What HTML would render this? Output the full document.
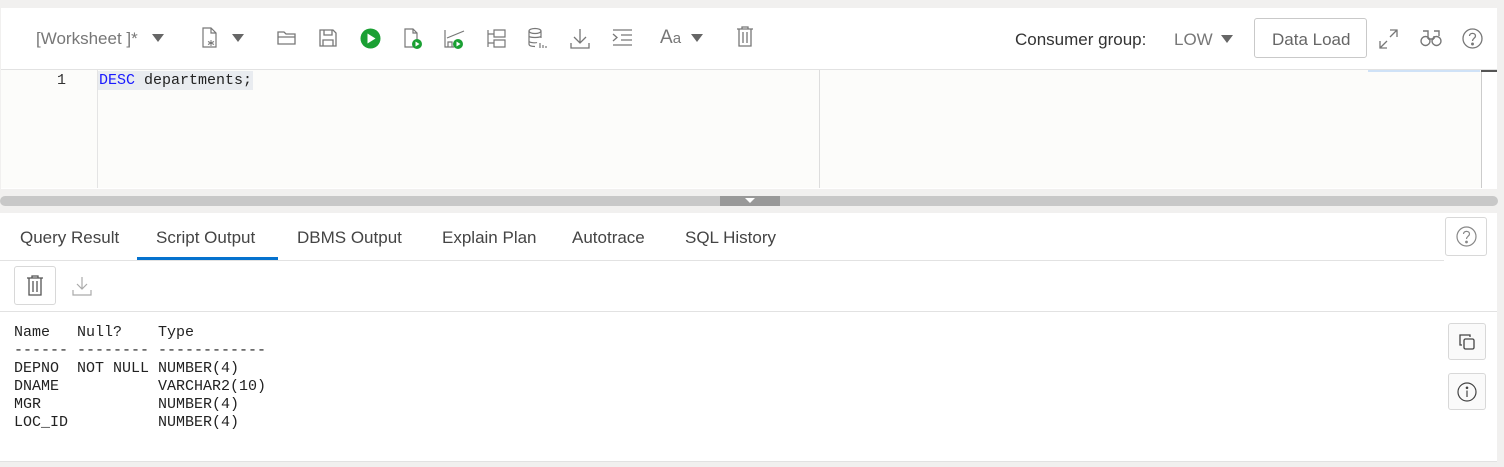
<!DOCTYPE html>
<html><head><style>
*{margin:0;padding:0;box-sizing:border-box}
body{width:1504px;height:467px;background:#f1f0ef;position:relative;overflow:hidden;font-family:"Liberation Sans",sans-serif;color:#333}
.abs{position:absolute}
.top{left:1px;top:8px;width:1496px;height:181px;background:#fff}
.tb{left:0;top:0;width:1496px;height:62px;border-bottom:1px solid #e2e2e2;background:#fff}
.ed{left:1px;top:70px;width:1480px;height:118px;background:#fcfcfa}
.t{font-size:17px;color:#555;white-space:nowrap}
svg{position:absolute;overflow:visible}
.mono{font-family:"Liberation Mono",monospace}
.tab{position:absolute;top:228px;font-size:17px;color:#444;white-space:nowrap}
.btn{position:absolute;border:1px solid #d8d8d8;border-radius:3px;background:#fafafa}
.pre{font-family:"Liberation Mono",monospace;font-size:15px;line-height:18px;color:#222;white-space:pre}
</style></head><body>
<div class="abs top">
 <div class="abs tb"></div>
</div>
<div class="abs ed"></div>
<div class="abs" style="left:97px;top:70px;width:1px;height:118px;background:#e4e4e4"></div>
<div class="abs" style="left:819px;top:70px;width:1px;height:118px;background:#ddd"></div>
<div class="abs" style="left:1481px;top:70px;width:1px;height:118px;background:#ccc"></div>
<div class="abs" style="left:1368px;top:70px;width:112px;height:2px;background:#cfe2f7"></div>
<div class="abs" style="left:1481px;top:70px;width:16px;height:2px;background:#555"></div>
<!-- toolbar -->
<div class="abs t" style="left:36px;top:29px;color:#777">[Worksheet ]*</div>
<svg style="left:152px;top:34px" width="12" height="8"><path d="M0 0H12L6 8Z" fill="#666"/></svg>
<svg style="left:202px;top:27px" width="20" height="22" fill="none" stroke="#777" stroke-width="1.2"><path d="M1 1H9L14 6V20H1Z M9 1V6H14"/><path d="M9 13v6M6 14.5l6 3M12 14.5l-6 3" stroke-width="1"/></svg>
<svg style="left:232px;top:34px" width="12" height="8"><path d="M0 0H12L6 8Z" fill="#666"/></svg>
<svg style="left:277px;top:30px" width="20" height="16" fill="none" stroke="#777" stroke-width="1.3"><path d="M1 2H7L9 4H18V14H1Z M1 7H18"/></svg>
<svg style="left:319px;top:29px" width="18" height="18" fill="none" stroke="#777" stroke-width="1.3"><path d="M1 1H14L17 4V17H1Z M5 1V6H13V1 M4 17V11H14V17"/></svg>
<svg style="left:360px;top:28px" width="21" height="21"><circle cx="10.5" cy="10.5" r="10" fill="#1aa033"/><path d="M7.5 5.5L15.5 10.5L7.5 15.5Z" fill="#fff"/></svg>
<svg style="left:404px;top:28px" width="20" height="22" fill="none" stroke="#777" stroke-width="1.2"><path d="M1 1H9L13 5V19H1Z M9 1V5H13"/><circle cx="13" cy="16" r="5" fill="#1aa033" stroke="none"/><path d="M11.5 13.5L15.5 16L11.5 18.5Z" fill="#fff" stroke="none"/></svg>
<svg style="left:444px;top:28px" width="22" height="22" fill="none" stroke="#777" stroke-width="1.2"><path d="M1 2V19H10 M3 10L20 3 M4 19V14H8V19"/><circle cx="14" cy="16" r="5" fill="#1aa033" stroke="none"/><path d="M12.5 13.5L16.5 16L12.5 18.5Z" fill="#fff" stroke="none"/></svg>
<svg style="left:487px;top:29px" width="20" height="20" fill="none" stroke="#777" stroke-width="1.2"><path d="M1 1V18 M1 5H7 M1 14H7 M7 1H18V8H7Z M7 11H18V18H7Z"/></svg>
<svg style="left:528px;top:28px" width="22" height="22" fill="none" stroke="#777" stroke-width="1.2"><ellipse cx="7" cy="3" rx="6" ry="2.5"/><path d="M1 3V16C1 18 4 18.5 7 18.5 M13 3V10 M1 8C1 10 13 10 13 8 M1 13C1 15 8 15 9 14.5 M12 15V20 M15 17V20 M18 18V20"/></svg>
<svg style="left:570px;top:28px" width="20" height="22" fill="none" stroke="#777" stroke-width="1.3"><path d="M10 1V15 M4 9L10 15L16 9 M1 15V20H19V15"/></svg>
<svg style="left:612px;top:29px" width="21" height="18" fill="none" stroke="#777" stroke-width="1.3"><path d="M1 1H20 M9 6H20 M9 11H20 M1 16H20 M1 5L5 8.5L1 12"/></svg>
<div class="abs t" style="left:660px;top:27px;font-size:19px;color:#777">A<span style="font-size:15px">a</span></div>
<svg style="left:691px;top:34px" width="12" height="8"><path d="M0 0H12L6 8Z" fill="#666"/></svg>
<svg style="left:736px;top:26px" width="18" height="21" fill="none" stroke="#777" stroke-width="1.3"><path d="M1 3H17 M6 3V1H12V3 M3 3V20H15V3 M7 6V17 M11 6V17"/></svg>
<div class="abs t" style="left:1015px;top:30px;color:#333">Consumer group:</div>
<div class="abs t" style="left:1174px;top:30px;color:#777">LOW</div>
<svg style="left:1221px;top:35px" width="12" height="8"><path d="M0 0H12L6 8Z" fill="#666"/></svg>
<div class="btn" style="left:1254px;top:18px;width:113px;height:40px;background:#fff;border-color:#c9c9c9"></div>
<div class="abs t" style="left:1272px;top:30px;color:#666">Data Load</div>
<svg style="left:1379px;top:29px" width="20" height="20" fill="none" stroke="#777" stroke-width="1.3"><path d="M11 1H18V8 M18 1L11 8 M1 12V19H8 M1 19L8 12"/></svg>
<svg style="left:1420px;top:29px" width="22" height="18" fill="none" stroke="#777" stroke-width="1.4"><path d="M3 2H8V7 M14 2H19V7 M8 7V10 M14 7V10 M8 10H14"/><circle cx="5.5" cy="12" r="4.5"/><circle cx="16.5" cy="12" r="4.5"/></svg>
<svg style="left:1462px;top:28px" width="21" height="21" fill="none" stroke="#777" stroke-width="1.3"><circle cx="10.5" cy="10.5" r="9.5"/><path d="M7.5 8C7.5 4.5 13.5 4.5 13.5 8C13.5 10 10.5 10.5 10.5 13"/><circle cx="10.5" cy="16" r="0.8" fill="#777"/></svg>
<!-- editor -->
<div class="abs mono" style="left:57px;top:72px;font-size:15px;color:#333">1</div>
<div class="abs" style="left:98px;top:71px;width:155px;height:19px;background:#e9ecf0"></div>
<div class="abs mono" style="left:99px;top:72px;font-size:15px;color:#222;white-space:pre"><span style="color:#1a1aff">DESC</span> departments;</div>
<!-- splitter -->
<div class="abs" style="left:0;top:196px;width:1498px;height:10px;background:#c8c8c8;border-radius:5px"></div>
<div class="abs" style="left:720px;top:196px;width:60px;height:10px;background:#999"></div>
<svg style="left:745px;top:198px" width="10" height="6"><path d="M0 0H10L5 5Z" fill="#fff"/></svg>
<!-- bottom -->
<div class="abs" style="left:0;top:213px;width:1497px;height:249px;background:#fff;border-bottom:1px solid #e2e2e2"></div>
<div class="tab" style="left:20px">Query Result</div>
<div class="tab" style="left:156px">Script Output</div>
<div class="tab" style="left:297px">DBMS Output</div>
<div class="tab" style="left:442px">Explain Plan</div>
<div class="tab" style="left:572px">Autotrace</div>
<div class="tab" style="left:685px">SQL History</div>
<div class="abs" style="left:0;top:260px;width:1444px;height:1px;background:#e2e2e2"></div>
<div class="abs" style="left:137px;top:257px;width:141px;height:3px;background:#0572ce"></div>
<div class="btn" style="left:1445px;top:217px;width:42px;height:39px;background:#fff"></div>
<svg style="left:1456px;top:226px" width="21" height="21" fill="none" stroke="#888" stroke-width="1.2"><circle cx="10.5" cy="10.5" r="9.5"/><path d="M7.5 8C7.5 4.5 13.5 4.5 13.5 8C13.5 10 10.5 10.5 10.5 13"/><circle cx="10.5" cy="16" r="0.8" fill="#888"/></svg>
<div class="btn" style="left:14px;top:266px;width:42px;height:39px;background:#fff"></div>
<svg style="left:26px;top:275px" width="18" height="21" fill="none" stroke="#555" stroke-width="1.3"><path d="M1 3H17 M6 3V1H12V3 M3 3V20H15V3 M7 6V17 M11 6V17"/></svg>
<svg style="left:72px;top:276px" width="20" height="20" fill="none" stroke="#aaa" stroke-width="1.2"><path d="M10 1V13 M5 8L10 13L15 8 M1 14V19H19V14"/></svg>
<div class="abs" style="left:0;top:311px;width:1497px;height:1px;background:#e2e2e2"></div>
<div class="abs pre" style="left:14px;top:324px">Name   Null?    Type         
------ -------- ------------ 
DEPNO  NOT NULL NUMBER(4)    
DNAME           VARCHAR2(10) 
MGR             NUMBER(4)    
LOC_ID          NUMBER(4)    </div>
<div class="btn" style="left:1448px;top:323px;width:38px;height:37px"></div>
<svg style="left:1458px;top:333px" width="18" height="18" fill="none" stroke="#444" stroke-width="1.3"><path d="M4 12H2V2H12V4"/><rect x="6" y="6" width="10" height="10" rx="1.5"/></svg>
<div class="btn" style="left:1448px;top:373px;width:38px;height:37px"></div>
<svg style="left:1457px;top:382px" width="20" height="20" fill="none" stroke="#444" stroke-width="1.2"><circle cx="10" cy="10" r="9"/><path d="M10 8.5V15"/><circle cx="10" cy="5.8" r="0.7" fill="#444"/></svg>
</body></html>
